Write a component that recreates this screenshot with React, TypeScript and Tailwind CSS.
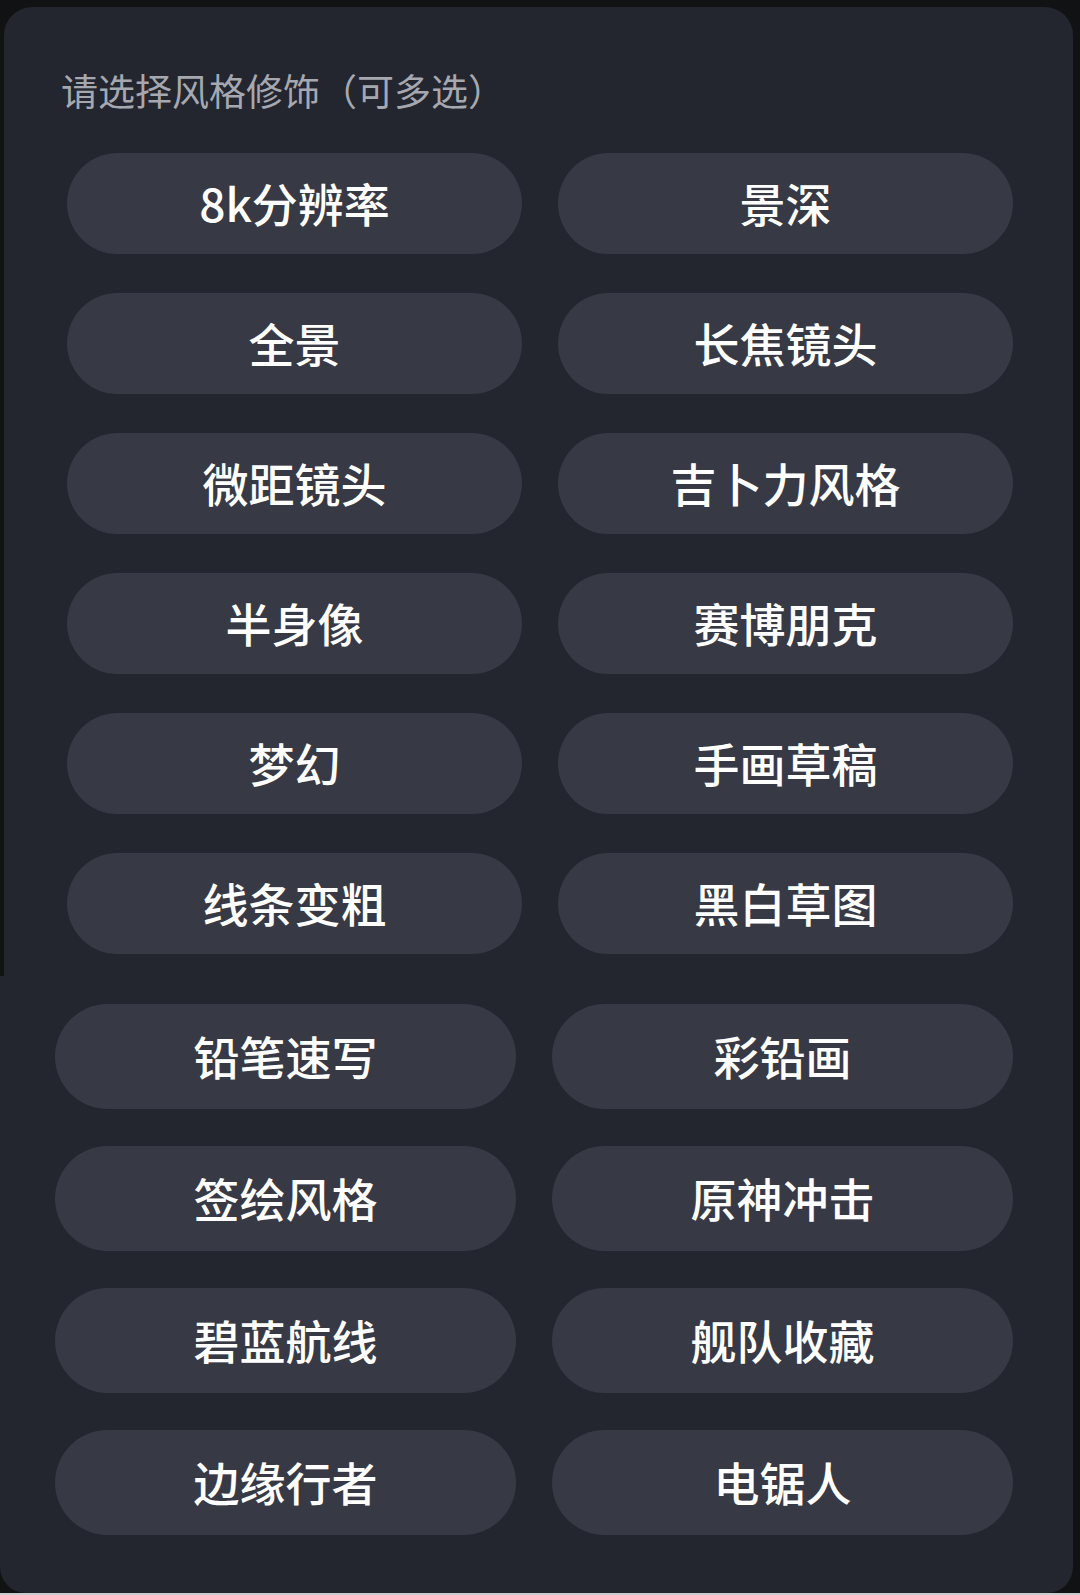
const upperOptions = [
  "8k分辨率",
  "景深",
  "全景",
  "长焦镜头",
  "微距镜头",
  "吉卜力风格",
  "半身像",
  "赛博朋克",
  "梦幻",
  "手画草稿",
  "线条变粗",
  "黑白草图",
];

const lowerOptions = [
  "铅笔速写",
  "彩铅画",
  "签绘风格",
  "原神冲击",
  "碧蓝航线",
  "舰队收藏",
  "边缘行者",
  "电锯人",
];

const fontStack = {
  fontFamily: '"Noto Sans CJK SC", "Noto Sans", sans-serif',
};

function StylePill({ label, tall }: { label: string; tall?: boolean }) {
  return (
    <button
      className={`flex items-center justify-center rounded-full bg-[#373945] text-white font-medium leading-none ${
        tall ? "h-[105px] text-[46px]" : "h-[101px] text-[46px]"
      }`}
    >
      <span className="-mt-[3px]">{label}</span>
    </button>
  );
}

export default function App() {
  return (
    <div
      className="w-[1080px] h-[1595px] bg-[#111214] pt-[7px] flex flex-col overflow-hidden"
      style={fontStack}
    >
      {/* Upper part of the panel */}
      <div className="ml-[4px] mr-[7px] h-[969px] rounded-t-[28px] bg-[#23252f] pt-[65px] pl-[57px] pr-[60px]">
        <p className="text-[37px] leading-[36px] text-[#a6a8b0]">
          请选择风格修饰（可多选）
        </p>
        <div className="mt-[45px] pl-[6px] grid grid-cols-2 gap-x-[36px] gap-y-[39px]">
          {upperOptions.map((opt) => (
            <StylePill key={opt} label={opt} />
          ))}
        </div>
      </div>

      {/* Lower part of the panel */}
      <div className="mr-[7px] h-[617px] rounded-b-[26px] bg-[#23252f] pt-[28px] pl-[55px] pr-[60px]">
        <div className="grid grid-cols-2 gap-x-[36px] gap-y-[37px]">
          {lowerOptions.map((opt) => (
            <StylePill key={opt} label={opt} tall />
          ))}
        </div>
      </div>
      <div className="h-[2px] bg-[#c9cdcd]" />
    </div>
  );
}
